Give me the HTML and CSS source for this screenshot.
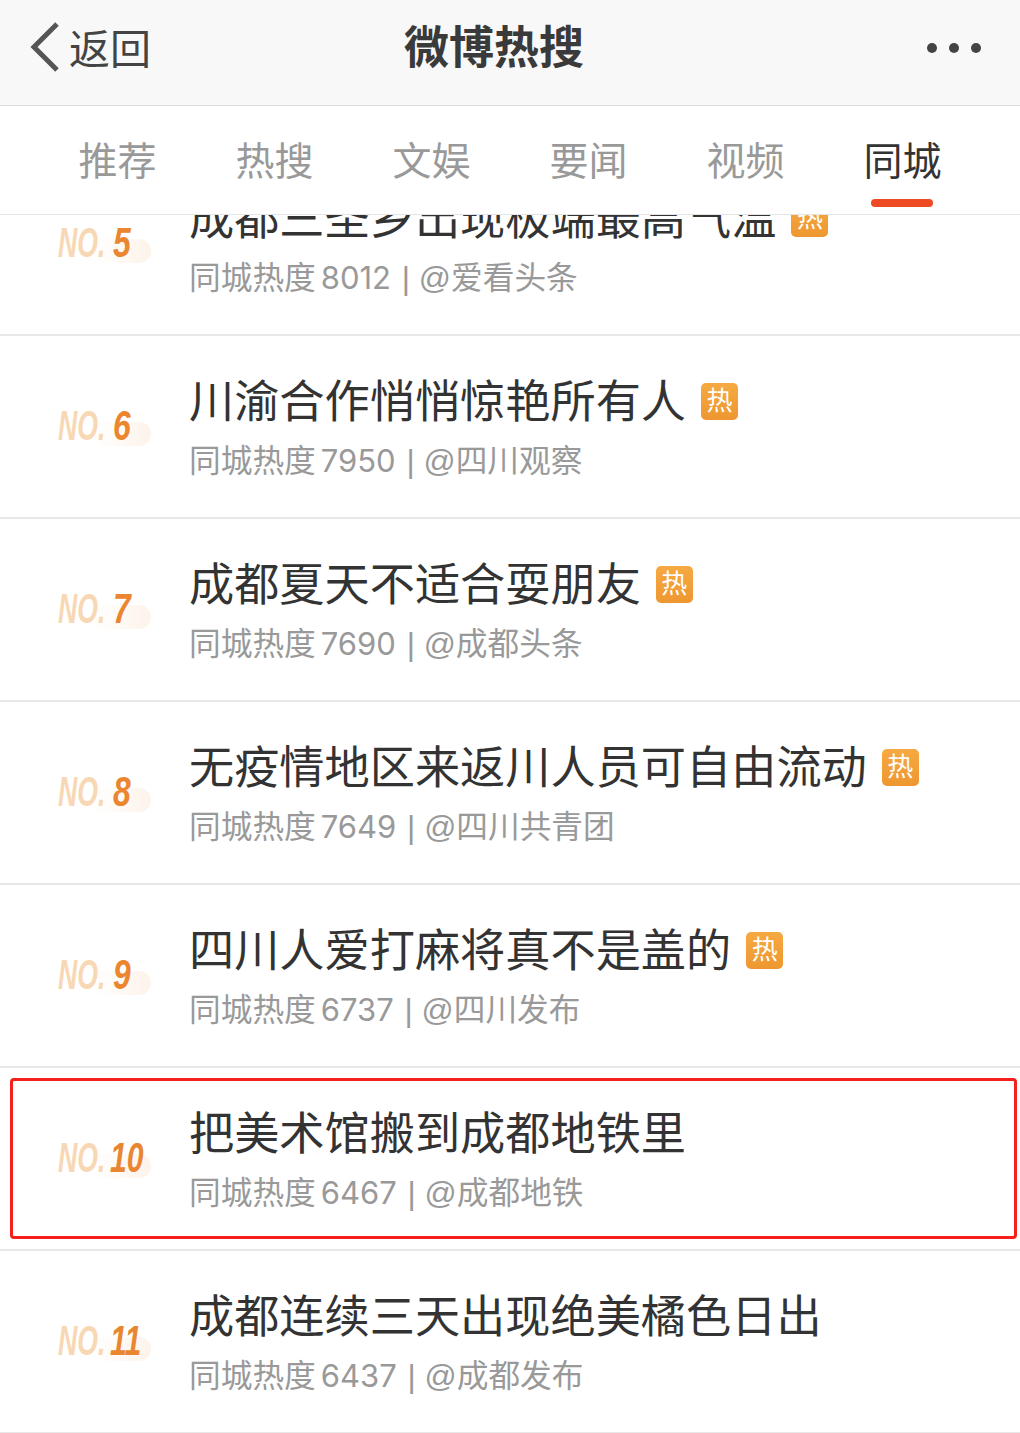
FILE: index.html
```html
<!DOCTYPE html>
<html lang="zh-CN">
<head>
  <meta charset="UTF-8" />
  <meta name="viewport" content="width=device-width, initial-scale=1.0"/>
  <title>微博热搜</title>
  <link rel="stylesheet" href="styles.css">
</head>
<body>

  <header class="topbar">
    <a class="back">
      <svg class="back-icon" width="30" height="52" viewBox="0 0 30 52">
        <polyline points="27,3 4,26 27,49" fill="none" stroke="#555" stroke-width="5"/>
      </svg>
      <span class="back-label">返回</span>
    </a>
    <h1 class="page-title">微博热搜</h1>
    <div class="more"><i></i><i></i><i></i></div>
  </header>

  <nav class="tabs">
    <a class="tab">推荐</a>
    <a class="tab">热搜</a>
    <a class="tab">文娱</a>
    <a class="tab">要闻</a>
    <a class="tab">视频</a>
    <a class="tab active">同城</a>
  </nav>

  <main class="list">
    <div class="list-inner">
      <div class="row">
        <div class="rank"><span class="no">NO.</span><span class="num">5</span></div>
        <div class="info">
          <div class="headline">成都三圣乡出现极端最高气温<span class="hot">热</span></div>
          <div class="meta">同城热度<span class="heat">8012</span> | @爱看头条</div>
        </div>
      </div>
      <div class="row">
        <div class="rank"><span class="no">NO.</span><span class="num">6</span></div>
        <div class="info">
          <div class="headline">川渝合作悄悄惊艳所有人<span class="hot">热</span></div>
          <div class="meta">同城热度<span class="heat">7950</span> | @四川观察</div>
        </div>
      </div>
      <div class="row">
        <div class="rank"><span class="no">NO.</span><span class="num">7</span></div>
        <div class="info">
          <div class="headline">成都夏天不适合耍朋友<span class="hot">热</span></div>
          <div class="meta">同城热度<span class="heat">7690</span> | @成都头条</div>
        </div>
      </div>
      <div class="row">
        <div class="rank"><span class="no">NO.</span><span class="num">8</span></div>
        <div class="info">
          <div class="headline">无疫情地区来返川人员可自由流动<span class="hot">热</span></div>
          <div class="meta">同城热度<span class="heat">7649</span> | @四川共青团</div>
        </div>
      </div>
      <div class="row">
        <div class="rank"><span class="no">NO.</span><span class="num">9</span></div>
        <div class="info">
          <div class="headline">四川人爱打麻将真不是盖的<span class="hot">热</span></div>
          <div class="meta">同城热度<span class="heat">6737</span> | @四川发布</div>
        </div>
      </div>
      <div class="row marked">
        <div class="rank"><span class="no">NO.</span><span class="num ten">10</span></div>
        <div class="info">
          <div class="headline">把美术馆搬到成都地铁里</div>
          <div class="meta">同城热度<span class="heat">6467</span> | @成都地铁</div>
        </div>
      </div>
      <div class="row">
        <div class="rank"><span class="no">NO.</span><span class="num ten">11</span></div>
        <div class="info">
          <div class="headline">成都连续三天出现绝美橘色日出</div>
          <div class="meta">同城热度<span class="heat">6437</span> | @成都发布</div>
        </div>
      </div>
    </div>
  </main>

</body>
</html>
```

FILE: styles.css
```css
*, *::before, *::after {
  box-sizing: border-box;
}
html, body {
  margin: 0;
  height: 1433px;
  overflow: hidden;
}
body {
  display: flex;
  flex-direction: column;
  font-family: "Liberation Sans", "Noto Sans CJK SC", sans-serif;
  background-color: #fff;
  color: #333;
}

.topbar {
  flex: none;
  height: 106px;
  display: grid;
  grid-template-columns: 1fr auto 1fr;
  align-items: center;
  padding: 0 39px 12px 30px;
  background-color: #f8f8f8;
  border-bottom: 1px solid #dcdcdc;
}
.back {
  display: flex;
  align-items: center;
  gap: 9px;
  font-size: 41px;
  color: #444;
}
.back-label {
  margin-bottom: 2px;
}
.page-title {
  margin: 0 0 4px -23px;
  font-size: 45px;
  font-weight: 700;
  color: #3a3a3a;
}
.more {
  display: flex;
  justify-content: flex-end;
  gap: 12px;
  margin-top: 2px;
}
.more i {
  width: 10px;
  height: 10px;
  border-radius: 50%;
  background-color: #444;
}

.tabs {
  flex: none;
  height: 109px;
  display: grid;
  grid-template-columns: repeat(6, 157px);
  padding-left: 39px;
  background-color: #fff;
  border-bottom: 1px solid #e4e4e4;
}
.tab {
  position: relative;
  padding-top: 27px;
  text-align: center;
  font-size: 39px;
  line-height: 58px;
  color: #999;
}
.tab.active {
  color: #333;
}
.tab.active::after {
  content: "";
  position: absolute;
  left: 50%;
  bottom: 7px;
  width: 62px;
  height: 8px;
  margin-left: -32px;
  border-radius: 4px;
  background-color: #ee4a24;
}

.list {
  flex: 1;
  overflow: hidden;
}
.list-inner {
  margin-top: -62px;
}
.row {
  position: relative;
  height: 183px;
  display: flex;
  padding-left: 58px;
  border-bottom: 2px solid #e8e8e8;
}
.marked::after {
  content: "";
  position: absolute;
  left: 10px;
  top: 10px;
  width: 1007px;
  height: 161px;
  border: 3px solid #f5201c;
  border-radius: 4px;
}

.rank {
  position: relative;
  flex: none;
  display: flex;
  width: 131px;
  height: 40px;
  margin-top: 69px;
  font-style: italic;
  font-weight: 700;
  font-size: 43px;
  line-height: 40px;
  white-space: nowrap;
}
.rank::before {
  content: "";
  position: absolute;
  left: 36px;
  top: 17px;
  width: 57px;
  height: 24px;
  border-radius: 0 12px 12px 0;
  background: linear-gradient(to right, #fff, #fdf3ea);
}
.no, .num {
  position: relative;
  transform-origin: left center;
}
.no {
  flex: none;
  width: 55px;
  color: #f8d8b4;
  transform: scaleX(0.62);
}
.num {
  color: #ea8630;
  transform: scaleX(0.74);
}
.num.ten {
  margin-left: -3px;
  transform: scaleX(0.7);
}

.info {
  padding-top: 39px;
}
.headline {
  display: flex;
  align-items: center;
  height: 56px;
  font-size: 45.2px;
  line-height: 56px;
  color: #333;
  white-space: nowrap;
}
.hot {
  flex: none;
  width: 37px;
  height: 37px;
  margin: 0 0 4px 15px;
  border-radius: 5px;
  text-align: center;
  font-size: 26px;
  line-height: 36px;
  color: #fff;
  background: linear-gradient(#f6a942, #ee9730);
}
.meta {
  margin-top: 8px;
  font-size: 31.7px;
  line-height: 44px;
  color: #999;
  white-space: nowrap;
}
.heat {
  margin: 0 2px 0 5px;
  font-family: Inter, "Liberation Sans", sans-serif;
  font-size: 31px;
}
```
